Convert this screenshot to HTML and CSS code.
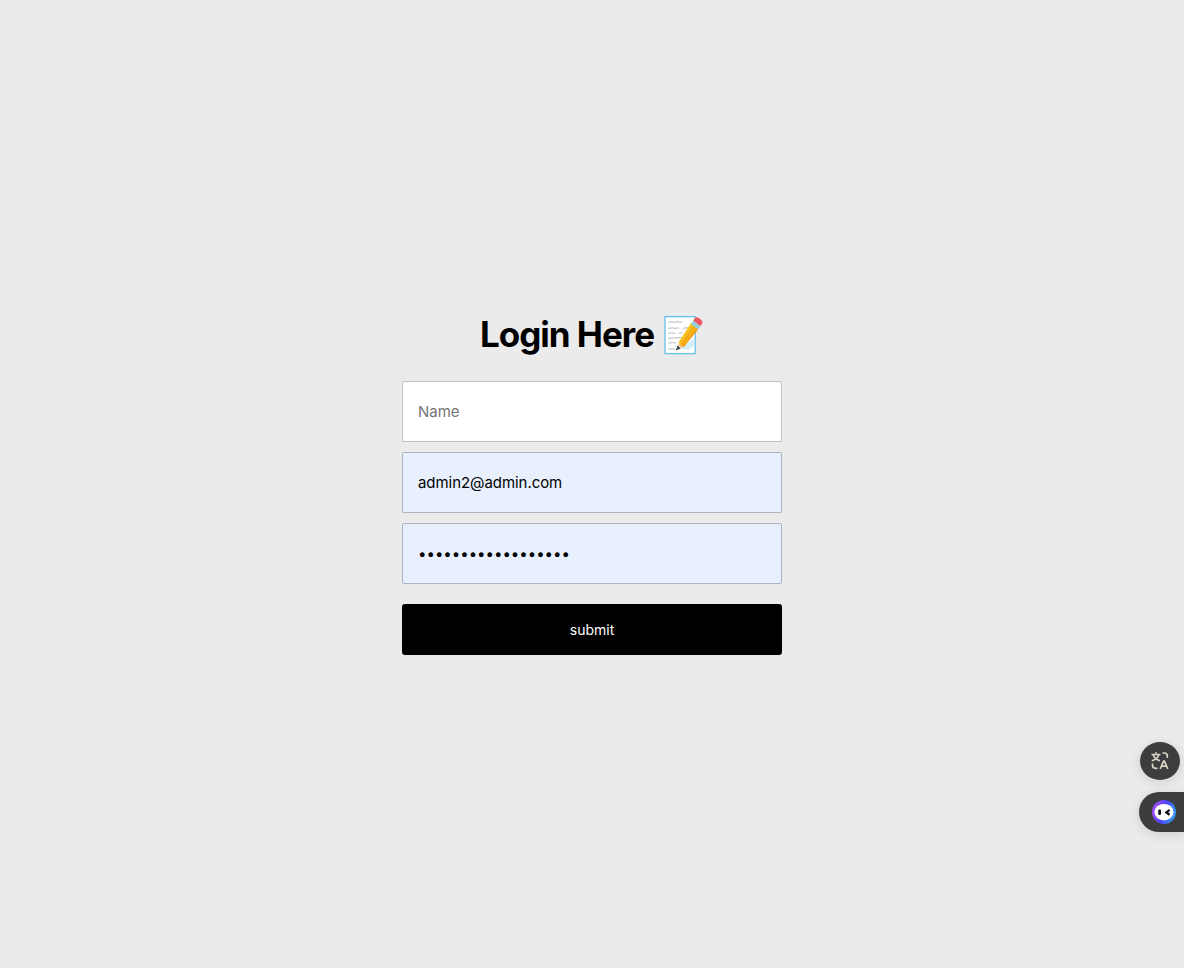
FILE: index.html
```html
<!DOCTYPE html>
<html lang="en">
<head>
<meta charset="utf-8">
<title>Login</title>
<link rel="stylesheet" href="styles.css">
</head>
<body>
<main class="page">
  <form class="login">
    <h1 class="title"><span class="title-text">Login Here</span>
      <svg class="memo" viewBox="0 0 40 40" preserveAspectRatio="none" aria-hidden="true">
        <defs><linearGradient id="wood" x1="0" y1="0" x2="1" y2="1"><stop offset="0.3" stop-color="#ffc928"/><stop offset="0.52" stop-color="#f9b416"/><stop offset="0.7" stop-color="#e98a18"/></linearGradient></defs>
        <rect x="1" y="1.6" width="31" height="37" fill="#fff" stroke="#64bfed" stroke-width="1.3"/>
        <path d="M16 33l15-9v7l-6 4z" fill="#d5edf8"/>
        <path d="M4.5 7.3l3-.5 3 .5 4-.5 4 .5M4.500 13.400l4-.6 3 .6 4-.6M19.500 13.200l5-.4M4.500 18.300l3-.4 4 .4M15 18.300l4-.4M4.500 23.500l5-.6 9-.2M4.500 28.300l4-.7 4 .4M4.500 34.300l4-.5 3 .5" fill="none" stroke="#9ba5aa" stroke-width=".8"/>
        <path d="M15 27.500l-2.200 7.600 7-3.200z" fill="#f5d19b"/>
        <path d="M27.400 8.300l7.800 6L20 32.600c-.8-1.400-1.600-1.600-2.700-1.700-.2-1.500-.8-2.500-2.600-3.100z" fill="url(#wood)"/>
        <path d="M31.300 10.800L17.300 30.400" stroke="#e29a13" stroke-width=".8"/>
        <path d="M13.800 30.600l-1.600 4.900 5-1.900z" fill="#37474f"/>
        <path d="M30 5.400l7.500 5.800-2.500 3.300-7.600-5.700z" fill="#94d1e0"/>
        <path d="M30 5.400l2-2.600c1.400-1.800 8.600 2.500 7.200 5.400L37.200 11z" fill="#f2555e"/>
      </svg>
    </h1>
    <input class="field" type="text" placeholder="Name" aria-label="Name">
    <input class="field filled" type="text" value="admin2@admin.com" aria-label="Email">
    <input class="field filled password" type="password" value="abcdefghijklmnopqr" aria-label="Password">
    <button class="submit" type="button">submit</button>
  </form>
</main>
<aside class="tools">
  <button class="tool translate" aria-label="Translate">
    <svg width="20" height="20" viewBox="0 0 20 20" fill="none" stroke="#d8d2c4" stroke-width="1.700">
      <path d="M1.500 3.500h9M6 1.300v2.200M3.300 4c.8 2.700 3 4.600 6.700 5.700M8.700 4C8 6.700 5.700 8.700 1.800 9.700M12.500 2h1.800c2 0 3 1 3 3v2M2.500 12.500v1.800c0 2 1 3 3 3H7.500M10.200 18l3.400-8h.8L17.800 18M11.400 15.200h5.200"/>
    </svg>
  </button>
  <button class="tool assistant" aria-label="Assistant">
    <svg width="24" height="24" viewBox="0 0 24 24">
      <defs><linearGradient id="ring" x1="0" y1="0.4" x2="1" y2="0.7"><stop stop-color="#a44bf5"/><stop offset=".5" stop-color="#4a45ff"/><stop offset="1" stop-color="#2aa5ee"/></linearGradient></defs>
      <circle cx="12" cy="12" r="12" fill="url(#ring)"/>
      <ellipse cx="12" cy="12.200" rx="9.600" ry="8.300" fill="#fff"/>
      <rect x="6.200" y="9.600" width="2.800" height="5.400" rx="1.200" fill="#111"/>
      <path d="M17.600 9.900l-3.200 2.500 3.200 2.300" fill="none" stroke="#111" stroke-width="2.300"/>
    </svg>
  </button>
</aside>
</body>
</html>
```
FILE: styles.css
```css
* { box-sizing: border-box; }
body {
  margin: 0;
  background: #ebebeb;
  font-family: Inter, "Liberation Sans", sans-serif;
}
.page {
  min-height: 100vh;
  display: flex;
  align-items: center;
  justify-content: center;
}
.login {
  width: 380px;
  display: flex;
  flex-direction: column;
  gap: 10px;
}
.title {
  display: flex;
  justify-content: center;
  align-items: center;
  gap: 9.5px;
  height: 44px;
  margin: 0 0 14px;
  padding-right: 1.5px;
  color: #000;
  font-size: 35px;
  line-height: 42px;
  font-weight: 700;
  letter-spacing: -1px;
  white-space: nowrap;
}
.title-text { padding-bottom: 3px; }
.memo { width: 39px; height: 40px; }
.field {
  width: 100%;
  height: 61px;
  padding: 0 15px;
  border: 1px solid #bfbfbf;
  border-radius: 2px;
  outline: 0;
  background: #fff;
  color: #000;
  font: 400 15px Inter, "Liberation Sans", sans-serif;
}
.field::placeholder { color: #757575; }
.filled { background: #e8f0fe; border-color: #adb5c2; letter-spacing: -.06px; }
.password { letter-spacing: 0; }
.submit {
  height: 51px;
  margin-top: 10px;
  padding: 0;
  border: 0;
  border-radius: 3px;
  background: #000;
  color: #fff;
  font: 400 14px Inter, "Liberation Sans", sans-serif;
}
.tools {
  position: fixed;
  right: 0;
  top: 742px;
  display: flex;
  flex-direction: column;
  align-items: flex-end;
  gap: 12px;
}
.tool {
  display: flex;
  align-items: center;
  border: 0;
  padding: 0;
  background: #3c3d3f;
  box-shadow: 0 2px 12px rgba(0, 0, 0, .13);
}
.translate {
  width: 40px;
  height: 38px;
  margin-right: 4px;
  justify-content: center;
  border-radius: 50%;
}
.assistant {
  width: 45px;
  height: 40px;
  padding-left: 13px;
  border-radius: 20px 0 0 20px;
}
```
